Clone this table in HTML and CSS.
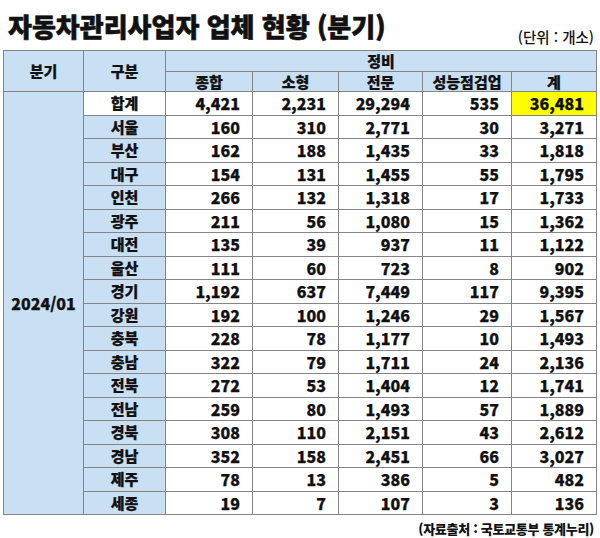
FILE: index.html
```html
<!DOCTYPE html>
<html lang="ko">
<head>
<meta charset="utf-8">
<link rel="stylesheet" href="styles.css">
</head>
<body>
<div class="page">
  <div class="top">
    <h1 class="title">자동차관리사업자 업체 현황 (분기)</h1>
    <div class="unit">(단위 : 개소)</div>
  </div>
  <table class="stats">
    <colgroup>
      <col class="c-q"><col class="c-g"><col class="c-1"><col class="c-2"><col class="c-3"><col class="c-4"><col class="c-5">
    </colgroup>
    <thead>
      <tr class="h1">
        <th rowspan="2" class="blue">분기</th>
        <th rowspan="2" class="blue">구분</th>
        <th colspan="5" class="blue">정비</th>
      </tr>
      <tr class="h2">
        <th class="blue">종합</th>
        <th class="blue">소형</th>
        <th class="blue">전문</th>
        <th class="blue">성능점검업</th>
        <th class="blue">계</th>
      </tr>
    </thead>
    <tbody>
      <tr><td rowspan="18" class="blue quarter">2024/01</td><td class="name white">합계</td><td>4,421</td><td>2,231</td><td>29,294</td><td>535</td><td class="hl">36,481</td></tr>
      <tr><td class="name blue">서울</td><td>160</td><td>310</td><td>2,771</td><td>30</td><td>3,271</td></tr>
      <tr><td class="name blue">부산</td><td>162</td><td>188</td><td>1,435</td><td>33</td><td>1,818</td></tr>
      <tr><td class="name blue">대구</td><td>154</td><td>131</td><td>1,455</td><td>55</td><td>1,795</td></tr>
      <tr><td class="name blue">인천</td><td>266</td><td>132</td><td>1,318</td><td>17</td><td>1,733</td></tr>
      <tr><td class="name blue">광주</td><td>211</td><td>56</td><td>1,080</td><td>15</td><td>1,362</td></tr>
      <tr><td class="name blue">대전</td><td>135</td><td>39</td><td>937</td><td>11</td><td>1,122</td></tr>
      <tr><td class="name blue">울산</td><td>111</td><td>60</td><td>723</td><td>8</td><td>902</td></tr>
      <tr><td class="name blue">경기</td><td>1,192</td><td>637</td><td>7,449</td><td>117</td><td>9,395</td></tr>
      <tr><td class="name blue">강원</td><td>192</td><td>100</td><td>1,246</td><td>29</td><td>1,567</td></tr>
      <tr><td class="name blue">충북</td><td>228</td><td>78</td><td>1,177</td><td>10</td><td>1,493</td></tr>
      <tr><td class="name blue">충남</td><td>322</td><td>79</td><td>1,711</td><td>24</td><td>2,136</td></tr>
      <tr><td class="name blue">전북</td><td>272</td><td>53</td><td>1,404</td><td>12</td><td>1,741</td></tr>
      <tr><td class="name blue">전남</td><td>259</td><td>80</td><td>1,493</td><td>57</td><td>1,889</td></tr>
      <tr><td class="name blue">경북</td><td>308</td><td>110</td><td>2,151</td><td>43</td><td>2,612</td></tr>
      <tr><td class="name blue">경남</td><td>352</td><td>158</td><td>2,451</td><td>66</td><td>3,027</td></tr>
      <tr><td class="name blue">제주</td><td>78</td><td>13</td><td>386</td><td>5</td><td>482</td></tr>
      <tr><td class="name blue">세종</td><td>19</td><td>7</td><td>107</td><td>3</td><td>136</td></tr>
    </tbody>
  </table>
  <div class="source">(자료출처 : 국토교통부 통계누리)</div>
</div>
</body>
</html>
```
FILE: styles.css
```css
* { box-sizing: border-box; }
html, body { margin: 0; padding: 0; background: #fff; }
body {
  font-family: "Noto Sans CJK KR", "Noto Sans", sans-serif;
  color: #111;
  width: 600px;
}
.page { padding: 0 4px 0 3px; }
.top {
  height: 50px;
  display: flex;
  justify-content: space-between;
  align-items: flex-end;
}
.title {
  margin: 0 0 9px 5px;
  font-size: 26px;
  line-height: 30px;
  font-weight: 900;
  letter-spacing: 0;
  -webkit-text-stroke: 0.6px #111;
}
.unit {
  font-size: 14.5px;
  line-height: 18px;
  font-weight: 500;
  margin: 0 2px 4px 0;
}
.stats {
  width: 593px;
  border-collapse: collapse;
  table-layout: fixed;
  font-size: 16px;
  font-weight: 900;
  -webkit-text-stroke: 0.25px #111;
}
.c-q { width: 80px; }
.c-g { width: 82px; }
.c-1 { width: 87px; }
.c-2 { width: 86px; }
.c-3 { width: 84px; }
.c-4 { width: 89px; }
.c-5 { width: 85px; }
.stats th, .stats td {
  border: 1px solid #858585;
  padding: 0 12px 0 0;
  text-align: right;
  line-height: 18px;
  white-space: nowrap;
}
.stats th {
  text-align: center;
  padding: 0;
  font-weight: 900;
  font-size: 15px;
}
.h1 th { height: 21px; }
.h2 th { height: 20px; }
.stats tbody tr { height: 23.5px; }
.blue { background: #c8dff4; }
.white { background: #fff; }
.stats td.name { text-align: center; padding: 0; font-size: 15px; }
.stats td.quarter { text-align: center; padding: 0; }
.hl { background: #ffff00; }
.source {
  text-align: right;
  font-size: 13px;
  font-weight: 900;
  line-height: 18px;
  letter-spacing: -0.3px;
  margin: 5px 2px 0 0;
}
```
